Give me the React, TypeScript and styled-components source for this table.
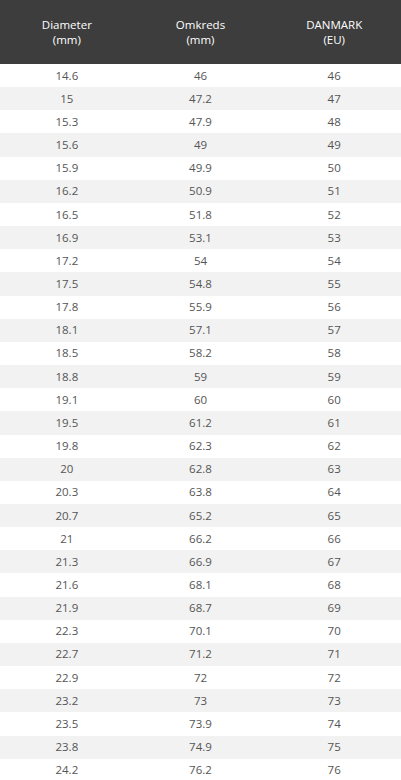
import styled, { createGlobalStyle } from 'styled-components';

const GlobalStyle = createGlobalStyle`
  html, body {
    margin: 0;
    padding: 0;
    background: #fff;
  }
`;

const Table = styled.table`
  width: 401px;
  border-collapse: collapse;
  table-layout: fixed;
  font-family: "Open Sans", "Liberation Sans", sans-serif;
`;

const HeadCell = styled.th`
  height: 64px;
  padding: 0 4px;
  background: #3d3d3d;
  color: #fff;
  font-size: 11.5px;
  font-weight: 400;
  line-height: 15px;
  text-align: center;
  vertical-align: middle;
`;

const Row = styled.tr<{ $shaded: boolean }>`
  background: ${p => (p.$shaded ? '#f2f2f2' : '#fff')};
`;

const Cell = styled.td`
  height: 23.17px;
  padding: 0;
  color: #555;
  font-size: 11.5px;
  line-height: 14px;
  text-align: center;
  vertical-align: middle;
`;

const rows: [string, string, string][] = [
  ['14.6', '46', '46'],
  ['15', '47.2', '47'],
  ['15.3', '47.9', '48'],
  ['15.6', '49', '49'],
  ['15.9', '49.9', '50'],
  ['16.2', '50.9', '51'],
  ['16.5', '51.8', '52'],
  ['16.9', '53.1', '53'],
  ['17.2', '54', '54'],
  ['17.5', '54.8', '55'],
  ['17.8', '55.9', '56'],
  ['18.1', '57.1', '57'],
  ['18.5', '58.2', '58'],
  ['18.8', '59', '59'],
  ['19.1', '60', '60'],
  ['19.5', '61.2', '61'],
  ['19.8', '62.3', '62'],
  ['20', '62.8', '63'],
  ['20.3', '63.8', '64'],
  ['20.7', '65.2', '65'],
  ['21', '66.2', '66'],
  ['21.3', '66.9', '67'],
  ['21.6', '68.1', '68'],
  ['21.9', '68.7', '69'],
  ['22.3', '70.1', '70'],
  ['22.7', '71.2', '71'],
  ['22.9', '72', '72'],
  ['23.2', '73', '73'],
  ['23.5', '73.9', '74'],
  ['23.8', '74.9', '75'],
  ['24.2', '76.2', '76'],
];

export default function App() {
  return (
    <>
      <GlobalStyle />
      <Table>
        <thead>
          <tr>
            <HeadCell>Diameter<br />(mm)</HeadCell>
            <HeadCell>Omkreds<br />(mm)</HeadCell>
            <HeadCell>DANMARK<br />(EU)</HeadCell>
          </tr>
        </thead>
        <tbody>
          {rows.map((r, i) => (
            <Row key={r[0]} $shaded={i % 2 === 1}>
              <Cell>{r[0]}</Cell>
              <Cell>{r[1]}</Cell>
              <Cell>{r[2]}</Cell>
            </Row>
          ))}
        </tbody>
      </Table>
    </>
  );
}
